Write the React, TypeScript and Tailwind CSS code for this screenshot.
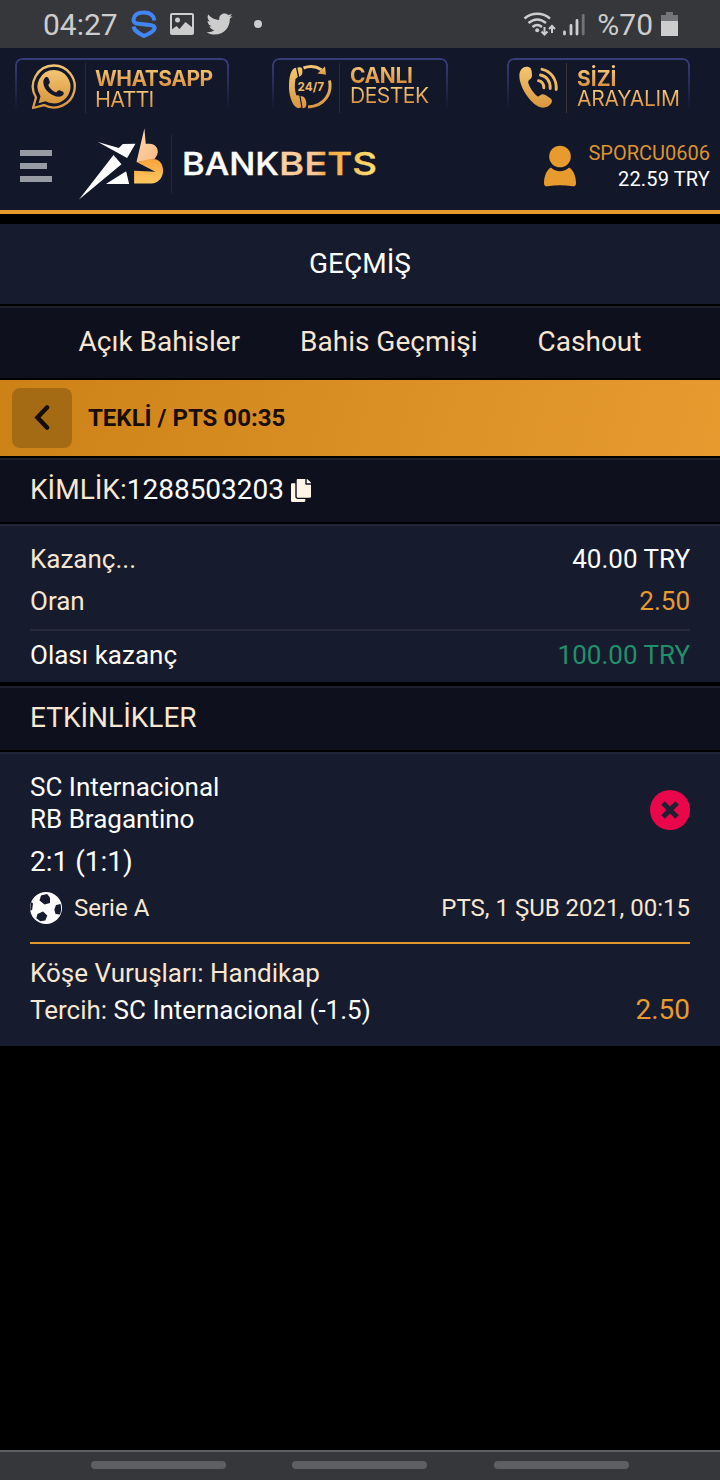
import type { ReactNode } from 'react';
import { FaCopy, FaTwitter } from 'react-icons/fa';

interface ContactButtonProps {
  icon: ReactNode;
  className: string;
  textClassName: string;
  title: string;
  titleClassName: string;
  subtitle: string;
  subtitleClassName: string;
}

const goldText = 'block w-max whitespace-nowrap bg-linear-to-b from-[#f8cf7e] to-[#d68a35] bg-clip-text text-transparent';

function GoldGradient({ id }: { id: string }) {
  return (
    <linearGradient id={id} x1="0" y1="0" x2="0" y2="1">
      <stop offset="0" stopColor="#f4c672" />
      <stop offset="1" stopColor="#d9963f" />
    </linearGradient>
  );
}

function WhatsappIcon() {
  return (
    <svg className="h-[46px] w-[46px]" viewBox="31 64 46 46" fill="none">
      <defs>
        <GoldGradient id="gold-wa" />
      </defs>
      <path
        d="M54 65.5a21 21 0 1 1-10 39.6l-11 2.9 3-10.500A21 21 0 0 1 54 65.5Z"
        stroke="url(#gold-wa)"
        strokeWidth="2.3"
        strokeLinejoin="round"
      />
      <path d="M54 70a16.7 16.7 0 1 1-8.5 31.2l-7 2 2-7A16.7 16.7 0 0 1 54 70Z" fill="url(#gold-wa)" />
      <path
        d="M45.500 77.200c1.200-.6 2.400-.3 2.900.7l1.300 3.600c.3 1-.1 1.800-1.500 3.500 1.500 3.500 4.300 6 8 7.500 1.500-1.800 2.200-2.600 3.300-2.300l3.500 1.500c1.100.6.9 2.300 0 3.300-4.300 5-19.500-2-19.700-12.800 0-2 .8-4 2.200-5Z"
        fill="#12172a"
      />
    </svg>
  );
}

function SupportIcon() {
  return (
    <svg className="h-[46px] w-[46px]" viewBox="288 64 46 46" fill="none">
      <defs>
        <GoldGradient id="gold-sup" />
      </defs>
      <path
        d="M296 67.800l1.800 9.200-2.300 2c-1.200 6-.8 11.500.8 16.200l3 .4 2 11.800-3.500.9c-6.500-2.700-9.300-15-8.800-24 .3-8 2-15.700 7-16.500Z"
        fill="url(#gold-sup)"
      />
      <path d="M297.300 67.600l2.700-.3c1.700 0 2.300 1 2.400 3.200.2 3-.2 5.200-3.200 6.300ZM300.600 96l2.500.4c2.500 1.700 3.600 4.600 3.200 8.500-.3 2.300-1.300 3.200-3.700 3.300Z" fill="url(#gold-sup)" />
      <path d="M303.500 68c5.500-2 12.500-1.800 18 1.700M329.500 80.500c2.500 12-4 25.500-21.500 26.500" stroke="url(#gold-sup)" strokeWidth="3" />
      <path d="M325 66.500l1 8.300-8.500-1.300Z" fill="url(#gold-sup)" />
      <text x="297.500" y="91.300" textLength="26.500" lengthAdjust="spacingAndGlyphs" fill="#edb965" fontFamily="Inter, sans-serif" fontSize="12" fontWeight="700">
        24/7
      </text>
    </svg>
  );
}

function CallIcon() {
  return (
    <svg className="h-[46px] w-[42px]" viewBox="518 64 42 46" fill="none">
      <defs>
        <GoldGradient id="gold-call" />
      </defs>
      <path
        d="M523 67.800c2.500-1.800 6.300-1.500 7.800.7.900 1.500 1.200 4.500 1.200 7.200 0 2-1.500 3.200-2.900 4.300-1.500 1.200-1 3.400.5 6.300 2 4 4.700 7.500 7.700 10 1.600.7 2.900-1.900 4.900-2.100 2.200-.2 5.300 1.900 8.500 4.300 1.800 1.500 1.500 3.500.2 5.300-2.600 3.300-6.500 4.500-10.400 3.500-8.500-2.300-19.500-17.300-21-29-.6-4.800.5-8.600 3.500-10.500Z"
        fill="url(#gold-call)"
      />
      <g stroke="#edb85f" strokeWidth="2.900" strokeLinecap="round">
        <path d="M542 69.300c8.800 1.700 14.800 9.800 14.200 20.200" />
        <path d="M540.500 75c6.300 1.300 10 6.300 9.700 13.500" />
        <path d="M538.500 80.700c3.600.8 5.400 3.300 5.300 7.200" />
      </g>
    </svg>
  );
}

function ContactButton({
  icon,
  className,
  textClassName,
  title,
  titleClassName,
  subtitle,
  subtitleClassName,
}: ContactButtonProps) {
  return (
    <button className={`relative flex h-[56px] items-start pt-[6px] text-left font-[Inter,sans-serif] ${className}`}>
      <span className="absolute inset-0 rounded-[7px] border-2 border-[#363c78] [mask-image:linear-gradient(to_bottom,black_10%,transparent_95%)]" />
      {icon}
      <span className={textClassName}>
        <span className={`${goldText} -mt-1 pt-1 ${titleClassName}`}>{title}</span>
        <span className={`${goldText} ${subtitleClassName}`}>{subtitle}</span>
      </span>
    </button>
  );
}

function StatusBar() {
  return (
    <div className="flex h-12 items-center bg-[#36373b] pr-[42px] pl-[43px] text-[#cdcdcd]">
      <span className="w-[88px] text-[30px]">04:27</span>
      <svg className="h-[28px] w-[26px]" viewBox="0 0 26 28" fill="none" stroke="#4285f4" strokeWidth="4">
        <path d="M23.500 10.500C22.500 5 19 2.500 13 2.500S3 4.500 2.500 9.500c-.2 3 2 4 5 4.300l11 1.200c3.500.4 5.500 1.200 5 3.500-.8 3.500-5.500 5-10.500 7.500-5-2.500-9.500-4.500-10.500-9.500" />
      </svg>
      <svg className="ml-[13px] h-[24px] w-[24px]" viewBox="0 0 24 24">
        <rect x="1" y="2" width="22" height="20" rx="1" fill="none" stroke="currentColor" strokeWidth="2" />
        <circle cx="7.500" cy="8" r="2.500" fill="currentColor" />
        <path d="M1 18l5.500-4 3 3 6-7 7.500 6v6H1Z" fill="currentColor" />
      </svg>
      <FaTwitter className="ml-3 h-[26px] w-[27px]" />
      <span className="ml-[21px] h-2 w-2 rounded-full bg-current" />
      <svg className="ml-auto h-[24px] w-[33px]" viewBox="0 0 33 24" fill="none" stroke="currentColor" strokeWidth="2.400">
        <path d="M1.500 6.500c7.500-6.300 18-6.300 25.500 0M5.500 11c5.500-4.500 12-4.500 17.500 0M9.500 15c3-2.500 6.500-2.500 9.500 0" />
        <circle cx="14.200" cy="18.300" r="2" fill="currentColor" stroke="none" />
        <path d="M21.500 15v7M18.500 19.500l3 3 3-3M29 21v-7M26 17l3-3 3 3" strokeWidth="2" />
      </svg>
      <svg className="ml-[7px] h-[24px] w-[22px]" viewBox="0 0 22 24" stroke="currentColor" strokeWidth="2.800" strokeLinecap="round">
        <path d="M1.500 20v2M8 13.500V22M14 8.500V22" />
        <path d="M20.200 3.500V22" opacity=".4" />
      </svg>
      <span className="ml-[12px] text-[30px]">%70</span>
      <svg className="ml-[8px] h-[24px] w-[17px] shrink-0" viewBox="0 0 17 24">
        <path d="M5 0h7v3h5v7H0V3h5Z" fill="#747578" />
        <path d="M0 9h17v15H0Z" fill="currentColor" />
      </svg>
    </div>
  );
}

function Logo() {
  return (
    <div className="flex items-start">
      <svg className="h-[72px] w-[85px]" viewBox="236 24 256 216">
        <defs>
          <linearGradient id="b-top" x1="0" y1="0" x2="1" y2="1">
            <stop offset="0" stopColor="#ffd9b0" />
            <stop offset="1" stopColor="#f6b981" />
          </linearGradient>
          <linearGradient id="b-bottom" x1="0" y1="0" x2="0" y2="1">
            <stop offset="0" stopColor="#f9a53c" />
            <stop offset="1" stopColor="#fdc75f" />
          </linearGradient>
        </defs>
        <path d="M293 66l63 18 12-12 38-1-25 43ZM236 239L340 105l24 28ZM317 192l61-38 9 38Z" fill="#fff" />
        <path d="M433 24l4 47h13c22 1 29 24 19 38l-6 9-54 9Z" fill="url(#b-top)" />
        <path d="M411 127l35-9h20c32 6 33 68-10 73h-54v-39l64 3Z" fill="url(#b-bottom)" />
      </svg>
      <span className="mt-[6px] ml-[7px] h-[60px] w-px bg-[#242637]" />
      <svg className="mt-[14px] ml-[8px] h-[44px] w-[202px]" viewBox="180 142 202 44">
        <defs>
          <linearGradient id="bets" x1="0" y1="0" x2="1" y2="0">
            <stop offset="0" stopColor="#fdd0a2" />
            <stop offset=".38" stopColor="#f8c795" />
            <stop offset=".48" stopColor="#f5a83d" />
            <stop offset="1" stopColor="#fbe277" />
          </linearGradient>
        </defs>
        <g fontFamily="Inter, sans-serif" fontSize="31" fontWeight="500">
          <text x="182" y="175.300" textLength="97" lengthAdjust="spacingAndGlyphs" fill="#fff" stroke="#fff" strokeWidth=".4">
            BANK
          </text>
          <text x="279" y="175.300" textLength="98" lengthAdjust="spacingAndGlyphs" fill="url(#bets)" stroke="url(#bets)" strokeWidth=".4">
            BETS
          </text>
        </g>
      </svg>
    </div>
  );
}

function Header() {
  return (
    <header className="h-[166px] border-b-4 border-[#e79a2d] bg-[#12172a]">
      <div className="flex pt-[10px] pl-[15px]">
        <ContactButton
          className="w-[214px] pl-[16px]"
          icon={<WhatsappIcon />}
          textClassName="ml-[8px] -mt-[1px] h-[50px] border-l border-[#2a2c3b] pt-[6px] pl-[9px]"
          title="WHATSAPP"
          titleClassName="text-[21px] leading-[20px] font-bold tracking-[-0.500px]"
          subtitle="HATTI"
          subtitleClassName="text-[21.500px] leading-[20px] tracking-[-0.800px]"
        />
        <ContactButton
          className="ml-[43px] w-[176px] pl-[16px]"
          icon={<SupportIcon />}
          textClassName="ml-[5px] -mt-[1px] h-[50px] border-l border-[#2a2c3b] pt-[3px] pl-[10px]"
          title="CANLI"
          titleClassName="text-[21px] leading-[20px] font-bold tracking-[-0.400px]"
          subtitle="DESTEK"
          subtitleClassName="text-[21px] leading-[20px] tracking-[-0.500px]"
        />
        <ContactButton
          className="ml-[59px] w-[183px] pl-[11px]"
          icon={<CallIcon />}
          textClassName="ml-[6px] -mt-[1px] h-[50px] border-l border-[#393434] pt-[6px] pl-[10px]"
          title="SİZİ"
          titleClassName="text-[21px] leading-[20px] font-bold tracking-[0px]"
          subtitle="ARAYALIM"
          subtitleClassName="text-[21px] leading-[20px] tracking-[-0.250px]"
        />
      </div>
      <div className="flex pt-[14px] pr-[10px] pl-5">
        <button className="mt-[22px] flex h-8 w-8 flex-col justify-between">
          <span className="h-[6px] w-8 bg-[#999ba4]" />
          <span className="h-[6px] w-[27px] bg-[#999ba4]" />
          <span className="h-[6px] w-8 bg-[#999ba4]" />
        </button>
        <div className="ml-[27px]">
          <Logo />
        </div>
        <svg className="mt-[17px] ml-auto h-[42px] w-[34px]" viewBox="0 0 34 42" fill="#e79a2d">
          <ellipse cx="17" cy="11.500" rx="10.800" ry="10.800" />
          <path d="M8 22.500c5 5 13 5 18 0 4.500 2 7 9.500 7 15.500 0 2.500-1 3.500-3.500 3.300-8-1.300-17-1.300-25 0C2 41.500 1 40.500 1 38c0-6 2.500-13.500 7-15.500Z" />
        </svg>
        <div className="mt-[12px] ml-[11px] text-right text-[20px] leading-[26px]">
          <p className="text-[#dc942f]">SPORCU0606</p>
          <p className="tracking-[0.150px] text-white">22.59 TRY</p>
        </div>
      </div>
    </header>
  );
}

function SectionTitle({ children }: { children: ReactNode }) {
  return (
    <div className="flex h-16 items-center border-t-2 border-[#1d1f2c] bg-[#0e101e] px-[30px] pb-[2px] text-[28px] text-[#f7e6d0]">
      {children}
    </div>
  );
}

function SoccerBall() {
  return (
    <svg className="h-8 w-8" viewBox="0 0 32 32">
      <circle cx="16" cy="16" r="16" fill="#fff" />
      <g fill="#171b2e">
        <path d="M11 3.500l6-1.500 3 3.500v5.500l-5.500 1.500-5-4Z" />
        <path d="M26 13l4.500-1c1 4 .7 7-.5 10.500l-4.500-.5-1.200-4.500Z" />
        <path d="M7.500 22l5.500-2.500 4.300 4-2 5-5 .8-4-3Z" />
        <path d="M1.500 10l1.500 1.500-.8 6L.5 19C0 16 .3 12.500 1.500 10Z" />
      </g>
    </svg>
  );
}

export default function App() {
  return (
    <div className="flex h-[1480px] w-[720px] flex-col overflow-hidden bg-black font-[Roboto,sans-serif]">
      <StatusBar />
      <Header />

      <h1 className="mt-[10px] flex h-20 items-center justify-center bg-[#171b2e] text-[28px] text-white">
        GEÇMİŞ
      </h1>
      <nav className="mt-[2px] flex h-[72px] items-center justify-center gap-[60px] border-t-2 border-[#1d1f2c] bg-[#0e101e] pb-[2px] text-[28px] text-[#f7e6d0]">
        <a>Açık Bahisler</a>
        <a>Bahis Geçmişi</a>
        <a>Cashout</a>
      </nav>

      <div className="mt-[2px] flex h-[76px] items-center bg-linear-[105deg] from-[#cd8218] to-[#e79b2f] pl-3">
        <button className="flex h-[60px] w-[60px] items-center justify-center rounded-lg bg-[#a56b14]">
          <svg className="h-[26px] w-[16px]" viewBox="0 0 16 26" fill="none" stroke="#130d05" strokeWidth="4.500" strokeLinecap="round">
            <path d="M13 2.500L3.500 12.500 13 22.500" />
          </svg>
        </button>
        <span className="ml-4 text-[24px] font-bold text-[#170e06]">TEKLİ / PTS 00:35</span>
      </div>

      <div className="mt-[2px]">
        <SectionTitle>
          KİMLİK:<span className="text-white">1288503203</span>
          <FaCopy className="ml-[7px] h-[23px] w-[20px] text-[#fff4e6]" />
        </SectionTitle>
      </div>

      <section className="mt-[2px] h-[158px] border-t-2 border-[#202437] bg-[#171b2e] px-[30px] pt-3 text-[26px]">
        <div className="flex h-[42px] items-center justify-between">
          <span className="text-[#f7e6d0]">Kazanç...</span>
          <span className="text-white">40.00 TRY</span>
        </div>
        <div className="flex h-[42px] items-center justify-between">
          <span className="text-[#f7e6d0]">Oran</span>
          <span className="text-[#e79a2d]">2.50</span>
        </div>
        <div className="mt-[7px] flex h-[52px] items-center justify-between border-t-2 border-[#252939] pb-[2px]">
          <span className="text-[#fffaf2]">Olası kazanç</span>
          <span className="text-[#21906a]">100.00 TRY</span>
        </div>
      </section>

      <div className="mt-1">
        <SectionTitle>ETKİNLİKLER</SectionTitle>
      </div>

      <section className="mt-[2px] h-[294px] border-t-2 border-[#202437] bg-[#171b2e] px-[30px] pt-[17px] text-[26px] text-white">
        <div className="flex items-center justify-between">
          <div className="leading-8">
            <p>SC Internacional</p>
            <p>RB Bragantino</p>
          </div>
          <span className="mt-[14px] flex h-10 w-10 items-center justify-center rounded-full bg-[#ea064b]">
            <svg className="h-[18px] w-[18px]" viewBox="0 0 18 18" stroke="#202033" strokeWidth="5">
              <path d="M2 2l14 14M16 2L2 16" />
            </svg>
          </span>
        </div>
        <p className="mt-[7px] text-[28px] leading-[40px]">2:1 (1:1)</p>
        <div className="mt-[10px] flex h-8 items-center text-[24px] text-[#f7e6d0]">
          <SoccerBall />
          <span className="ml-3">Serie A</span>
          <span className="ml-auto">PTS, 1 ŞUB 2021, 00:15</span>
        </div>
        <div className="mt-[18px] border-t-2 border-[#e0982f] pt-[11px] leading-9">
          <p className="text-[#f7e6d0]">Köşe Vuruşları: Handikap</p>
          <div className="flex items-center justify-between">
            <p>
              <span className="text-[#f7e6d0]">Tercih:</span> SC Internacional (-1.5)
            </p>
            <span className="mt-px text-[28px] text-[#e79a2d]">2.50</span>
          </div>
        </div>
      </section>

      <div className="mt-auto flex h-[30px] items-start border-t-2 border-[#5e5f63] bg-[#36373b] pt-[9px] pl-[91px]">
        <span className="h-2 w-[135px] rounded-full bg-[#5e5f63]" />
        <span className="ml-[66px] h-2 w-[135px] rounded-full bg-[#5e5f63]" />
        <span className="ml-[67px] h-2 w-[135px] rounded-full bg-[#5e5f63]" />
      </div>
    </div>
  );
}
